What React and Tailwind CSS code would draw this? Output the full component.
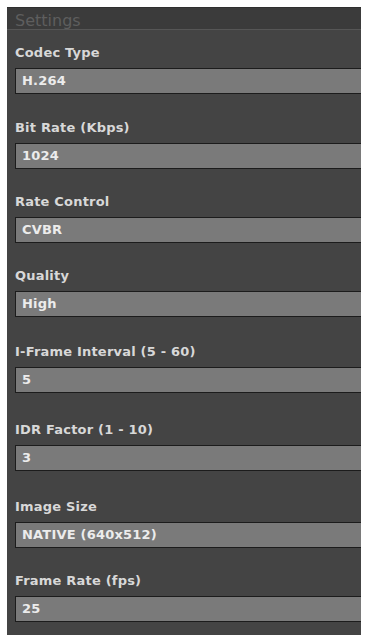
import React from 'react'

const fields = [
  { label: 'Codec Type', value: 'H.264', mt: 'mt-0' },
  { label: 'Bit Rate (Kbps)', value: '1024', mt: 'mt-[26px]' },
  { label: 'Rate Control', value: 'CVBR', mt: 'mt-[25px]' },
  { label: 'Quality', value: 'High', mt: 'mt-[25px]' },
  { label: 'I-Frame Interval (5 - 60)', value: '5', mt: 'mt-[27px]' },
  { label: 'IDR Factor (1 - 10)', value: '3', mt: 'mt-[29px]' },
  { label: 'Image Size', value: 'NATIVE (640x512)', mt: 'mt-[28px]' },
  { label: 'Frame Rate (fps)', value: '25', mt: 'mt-[25px]' },
]

function Field({ label, value, mt }){
  return (
    <div className={mt}>
      <div className="h-4 leading-4 text-[13px] font-bold tracking-[0.2px] text-[#d8d8d8] whitespace-nowrap">{label}</div>
      <div className="mt-[7px] h-[26px] border border-r-0 border-[#1c1c1c] bg-[#7a7a7a] pl-[6px] leading-[24px] text-[13px] font-bold tracking-[0.2px] text-[#ececec] whitespace-nowrap">
        {value}
      </div>
    </div>
  )
}

export default function App(){
  return (
    <div className="w-[365px] h-[637px] bg-white pt-[7px] pl-[7px] overflow-hidden" style={{ fontFamily: '"DejaVu Sans", Verdana, sans-serif' }}>
      <div className="w-[354px] h-[628px] bg-[#444444]">
        {/* header */}
        <div className="h-[23px] bg-[#3b3b3b] border-t border-[#2f2f2f] border-b border-b-[#565656] pl-2 pt-[3px] leading-[20px] text-[16px] text-[#5e5e5e] overflow-visible">
          Settings
        </div>
        <div className="pl-2 pt-[15px]">
          {fields.map(f => <Field key={f.label} {...f}/>)}
        </div>
      </div>
    </div>
  )
}
